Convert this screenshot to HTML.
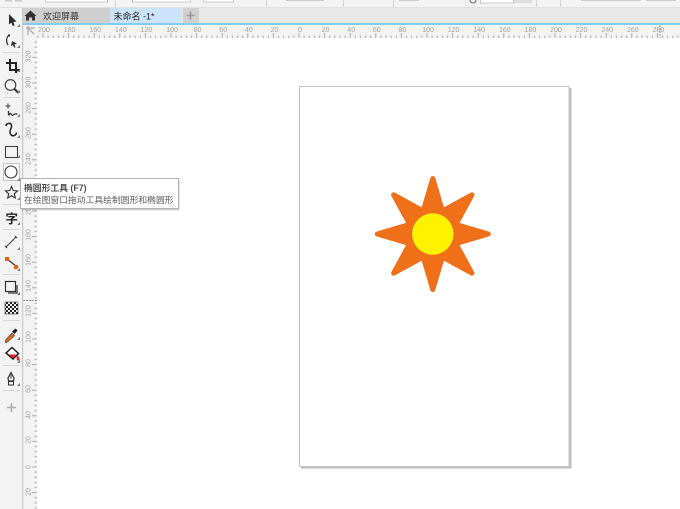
<!DOCTYPE html>
<html lang="zh"><head><meta charset="utf-8"><title>CorelDRAW</title>
<style>
html,body{margin:0;padding:0;background:#fff;width:680px;height:509px;overflow:hidden}
svg{display:block;position:absolute;left:0;top:0;filter:blur(.35px)}
text{font-family:"Liberation Sans","Noto Sans CJK SC",sans-serif}
.h text{font-size:7px;fill:#a4a4a4;text-anchor:middle}
.i{fill:none;stroke:#333;stroke-width:1.2}
.c{fill:#777}
</style></head><body>
<svg width="680" height="509" viewBox="0 0 680 509" xmlns="http://www.w3.org/2000/svg">
<defs>
<pattern id="tx" x="298.500" y="26" width="25.600" height="12" patternUnits="userSpaceOnUse">
<path d="M.5 7V12M5.600 9.500V12M10.700 9.500V12M15.900 9.500V12M21 9.500V12" stroke="#aaa" stroke-width="1" fill="none"/></pattern>
<pattern id="ty" x="24" y="466.500" width="13" height="25.600" patternUnits="userSpaceOnUse">
<path d="M8 .5H13M10.500 5.600H13M10.500 10.700H13M10.500 15.900H13M10.500 21H13" stroke="#aaa" stroke-width="1" fill="none"/></pattern>
<pattern id="chk" width="4" height="4" patternUnits="userSpaceOnUse"><rect width="4" height="4" fill="#eee"/><rect width="2" height="2" fill="#222"/><rect x="2" y="2" width="2" height="2" fill="#222"/></pattern>
</defs>
<rect width="680" height="509" fill="#fff"/>

<!-- top property bar -->
<rect width="680" height="8" fill="#f3f3f3"/>
<rect y="7" width="680" height="1" fill="#e0e0e0"/>
<g fill="#fff" stroke="#c8c8c8"><rect x="45.500" y="-4" width="62" height="6"/><rect x="132.500" y="-4" width="58" height="6"/><rect x="203.500" y="-4" width="30" height="6"/><rect x="480.500" y="-4" width="33" height="7"/></g>
<rect x="514" y="-4" width="18" height="7" fill="#ddd"/>
<g fill="#ccc"><rect x="5" y="0" width="7" height="1.500"/><rect x="15" y="0" width="7" height="1.500"/><rect x="286" y="0" width="38" height="1"/><rect x="399" y="0" width="20" height="1"/><rect x="581" y="0" width="60" height="1"/><rect x="646" y="0" width="30" height="1"/></g>
<g fill="#d4d4d4"><rect x="115" y="0" width="1" height="7"/><rect x="266" y="0" width="1" height="7"/><rect x="343" y="0" width="1" height="7"/><rect x="393" y="0" width="1" height="7"/><rect x="536" y="0" width="1" height="7"/><rect x="560" y="0" width="1" height="7"/></g>
<circle cx="473" cy="0" r="3" fill="none" stroke="#666"/>

<!-- tab bar -->
<rect y="8" width="680" height="15" fill="#e8e8e8"/>
<rect x="23" y="8" width="87" height="15" fill="#cfcfcf"/>
<rect x="110" y="8" width="72" height="15" fill="#cbe3fb"/>
<rect x="183" y="8" width="16" height="15" fill="#d0d0d0"/>
<path d="M190.500 11.500v8M186.500 15.500h8" stroke="#9a9a9a" stroke-width="1.600" fill="none"/>
<path d="M24.500 16l6-5.500 6 5.500h-1.500v4.500h-3v-3h-3v3h-3v-4.500z" fill="#333"/>
<text x="43" y="19.500" font-size="9" fill="#333">欢迎屏幕</text>
<text x="113.500" y="19.500" font-size="9" fill="#222">未命名 -1*</text>
<rect y="23" width="680" height="2" fill="#82cbf2"/>

<!-- rulers -->
<rect x="0" y="25" width="680" height="13" fill="#f3f3f3"/>
<rect x="23" y="25" width="14" height="484" fill="#f3f3f3"/>
<rect x="37" y="26" width="643" height="12" fill="url(#tx)"/>
<rect x="24" y="38" width="13" height="471" fill="url(#ty)"/>
<g class="h">
<text x="44" y="32">200</text><text x="69.600" y="32">180</text><text x="95.200" y="32">160</text><text x="120.800" y="32">140</text><text x="146.400" y="32">120</text><text x="172" y="32">100</text><text x="197.600" y="32">80</text><text x="223.200" y="32">60</text><text x="248.800" y="32">40</text><text x="274.400" y="32">20</text><text x="300" y="32">0</text><text x="325.600" y="32">20</text><text x="351.200" y="32">40</text><text x="376.800" y="32">60</text><text x="402.400" y="32">80</text><text x="428" y="32">100</text><text x="453.600" y="32">120</text><text x="479.200" y="32">140</text><text x="504.800" y="32">160</text><text x="530.400" y="32">180</text><text x="556" y="32">200</text><text x="581.600" y="32">220</text><text x="607.200" y="32">240</text><text x="632.800" y="32">260</text><text x="658.400" y="32">280</text>
<text transform="translate(30.500 56.500) rotate(-90)">320</text>
<text transform="translate(30.500 82.500) rotate(-90)">300</text>
<text transform="translate(30.500 108) rotate(-90)">280</text>
<text transform="translate(30.500 133) rotate(-90)">260</text>
<text transform="translate(30.500 159) rotate(-90)">240</text>
<text transform="translate(30.500 184) rotate(-90)">220</text>
<text transform="translate(30.500 209) rotate(-90)">200</text>
<text transform="translate(30.500 235) rotate(-90)">180</text>
<text transform="translate(30.500 260) rotate(-90)">160</text>
<text transform="translate(30.500 286) rotate(-90)">140</text>
<text transform="translate(30.500 311) rotate(-90)">120</text>
<text transform="translate(30.500 337) rotate(-90)">100</text>
<text transform="translate(30.500 363) rotate(-90)">80</text>
<text transform="translate(30.500 389) rotate(-90)">60</text>
<text transform="translate(30.500 415) rotate(-90)">40</text>
<text transform="translate(30.500 440) rotate(-90)">20</text>
<text transform="translate(30.500 467) rotate(-90)">0</text>
<text transform="translate(30.500 492) rotate(-90)">20</text>
</g>
<path d="M26 28h9M28 26v9M29 29l5 5" stroke="#999" fill="none"/>
<path d="M660 25v13" stroke="#999" stroke-dasharray="2 1"/>
<path d="M23 300.500h14" stroke="#888" stroke-dasharray="2 1"/>

<!-- left toolbox -->
<rect x="0" y="8" width="22.500" height="501" fill="#f3f3f3"/>
<rect x="22" y="8" width="1.200" height="501" fill="#c8c8c8"/>
<g fill="#d8d8d8"><rect x="3" y="52" width="17" height="1"/><rect x="3" y="97" width="17" height="1"/><rect x="3" y="204" width="17" height="1"/><rect x="3" y="229" width="17" height="1"/><rect x="3" y="274" width="17" height="1"/><rect x="3" y="320" width="17" height="1"/><rect x="3" y="365" width="17" height="1"/><rect x="3" y="390" width="17" height="1"/></g>

<!-- pick -->
<path d="M9 14l7.500 7.500-3 .5 1 3.500-2 .5-1-3.500-2.500 2z" fill="#2c2c2c"/>
<!-- shape -->
<path d="M9 35c-3 3-3 7-1 10" class="i"/><path d="M12 41l5 2.500-2.500 1 1 3-1.500 0-1-2.500-2 1z" fill="#333"/><circle cx="9" cy="35.500" r="1.200" fill="#333"/>
<!-- crop -->
<path d="M10 59v11h10M6 63h10v10" fill="none" stroke="#222" stroke-width="2"/>
<!-- zoom -->
<circle cx="10.500" cy="85" r="5.300" fill="none" stroke="#333" stroke-width="1.100"/><path d="M14.500 89l4 4" stroke="#333" stroke-width="2"/>
<!-- freehand -->
<path d="M8 103.500v5M5.500 106h5" stroke="#555" stroke-width="1.200"/><path d="M8.500 111v3.500c1 1.500 1-2.500 2.500-.5s1.500 1.500 3 .5 2-.5 3.500-.5" fill="none" stroke="#333" stroke-width="1.300"/>
<!-- artistic media -->
<path d="M6 126c0-3 4.500-3.500 5.500-1 1 3-3 5.500-1 9 1.500 3 5.500 2 6-1.500" fill="none" stroke="#222" stroke-width="1.500"/>
<!-- rect -->
<rect x="5.500" y="146.500" width="12" height="11" fill="none" stroke="#444" stroke-width="1.100"/>
<!-- ellipse selected -->
<rect x="3.500" y="163.500" width="16" height="17" fill="#fff" stroke="#c4c4c4"/>
<circle cx="11" cy="172" r="6" fill="none" stroke="#333" stroke-width="1.100"/>
<!-- star -->
<path d="M11.500 186.500l1.700 4 4.300.4-3.200 2.900 1 4.200-3.800-2.200-3.800 2.200 1-4.200-3.200-2.900 4.300-.4z" fill="none" stroke="#333" stroke-width="1.100"/>
<!-- text -->
<text x="5.500" y="223" font-size="12.500" font-weight="700" fill="#222">字</text>
<!-- line -->
<path d="M6 247l10-10" stroke="#444" stroke-width="1.100"/><path d="M5 246l2 2M15 236l2 2" stroke="#333"/>
<!-- connector -->
<path d="M7 259l9 7" stroke="#333" stroke-width="1.200"/><rect x="5" y="257" width="4" height="4" fill="#e8641e"/><rect x="14" y="265" width="4" height="4" fill="#e8641e"/>
<!-- shadow -->
<rect x="5.500" y="281.500" width="10" height="10" fill="#f3f3f3" stroke="#333" stroke-width="1.200"/><path d="M17 285v8h-9" fill="none" stroke="#555" stroke-width="1.600"/>
<!-- transparency -->
<rect x="5" y="302" width="13" height="12" fill="url(#chk)" stroke="#444" stroke-width=".6"/>
<!-- eyedropper -->
<path d="M5.500 340l6.500-7 2.500 2.500-7 6.500-2 .5z" fill="#e8641e" stroke="#444" stroke-width=".7"/><path d="M12 331.500l3.500-3 2 2-3 3.500z" fill="#1c1c1c"/>
<!-- fill -->
<path d="M6 353l6-5.500 6.500 6-5.500 5.500z" fill="#fff" stroke="#1c1c1c" stroke-width="1.500"/><path d="M8.500 354.500h7.500l-3 4z" fill="#e81c24"/><path d="M16.500 357l1.500-1.500 1.500 3.500v1.500h-2.500z" fill="#e81c24"/>
<!-- outline pen -->
<path d="M11 372.500l3 5.500-.5 3h-5l-.5-3z" fill="none" stroke="#333" stroke-width="1.200"/><rect x="8.500" y="381.500" width="5" height="3.500" fill="none" stroke="#333"/><path d="M11 374.500v4" stroke="#333"/>
<!-- plus -->
<path d="M11.500 403v9M7 407.500h9" stroke="#aeaeae" stroke-width="1.600"/>
<!-- flyout corners -->
<g class="c"><path d="M20 24v3h-3zM20 45v3h-3zM20 69v3h-3zM20 90v3h-3zM20 114v3h-3zM20 135v3h-3zM20 155v3h-3zM20 178v3h-3zM20 197v3h-3zM20 222v3h-3zM20 247v3h-3zM20 268v3h-3zM20 292v3h-3zM20 337v3h-3zM20 360v3h-3zM20 383v3h-3z"/></g>

<!-- page -->
<rect x="301" y="88" width="270.500" height="380.500" fill="#bdbdbd"/>
<rect x="299.500" y="86.500" width="269.500" height="380" fill="#fff" stroke="#c6c6c6"/>

<!-- star shape -->
<polygon points="432.800,178.500 442.400,210.900 472,194.800 455.900,224.400 488.300,234 455.900,243.600 472,273.200 442.400,257.100 432.800,289.500 423.200,257.100 393.600,273.200 409.700,243.600 377.300,234 409.700,224.400 393.600,194.800 423.200,210.900" fill="#f0701a" stroke="#f0701a" stroke-width="5" stroke-linejoin="round"/>
<circle cx="432.800" cy="234" r="20.700" fill="#fff200"/>

<!-- tooltip -->
<rect x="21.500" y="180.500" width="158" height="30" fill="#000" fill-opacity=".18"/>
<rect x="20.500" y="178.500" width="158" height="30" fill="#fff" stroke="#b0b0b0"/>
<text x="24" y="191" font-size="8.800" font-weight="700" fill="#4c4c4c">椭圆形工具 (F7)</text>
<text x="24" y="203" font-size="8.800" fill="#5c5c5c">在绘图窗口拖动工具绘制圆形和椭圆形</text>
</svg>
</body></html>
